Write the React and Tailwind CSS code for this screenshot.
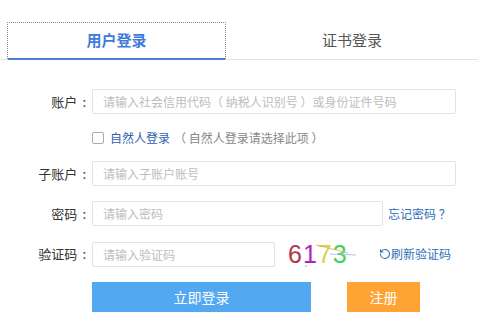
import { RotateCw } from 'lucide-react';

const FONT = { fontFamily: '"Microsoft YaHei", "Noto Sans CJK SC", "Noto Sans", sans-serif' };

function Field({ label, placeholder, width = 'w-[364px]' }) {
  return (
    <div className="flex items-center">
      <span className="w-[92px] pr-[3px] flex justify-end text-[13px] text-[#333]">
        {label}
        <span className="ml-[5px] mr-[3px]">:</span>
      </span>
      <input
        placeholder={placeholder}
        className={`${width} h-[25px] rounded-[2px] border border-[#e3e3e3] px-[10px] text-[12px] outline-none placeholder:text-[#bdbdbd]`}
      />
    </div>
  );
}

export default function App() {
  return (
    <div className="w-[488px] h-[327px] bg-white overflow-hidden" style={FONT}>
      {/* Tabs */}
      <div className="pt-[22px] flex border-b border-[#e2e2e2] w-[478px]">
        <div className="ml-[7px] w-[219px] h-[37px] border border-dotted border-[#888] border-b-0 relative flex items-center justify-center">
          <span className="text-[15px] font-bold text-[#3f7bd9] -mt-[1px]">用户登录</span>
          <div className="absolute left-0 right-0 -bottom-[1px] h-[2px] bg-[#4a80d4]" />
        </div>
        <div className="flex-1 h-[37px] flex items-center justify-center">
          <span className="text-[15px] text-[#555] -mt-[1px]">证书登录</span>
        </div>
      </div>

      <div className="mt-[29px] flex flex-col">
        <Field label="账户" placeholder="请输入社会信用代码（ 纳税人识别号 ）或身份证件号码" />

        <div className="mt-[18px] ml-[92px] flex items-center h-[12px]">
          <span className="w-[12px] h-[12px] border border-[#aaa] rounded-[2px] bg-white" />
          <span className="ml-[6px] text-[12px] text-[#2f5fb0]">自然人登录</span>
          <span className="ml-[4px] text-[12px] text-[#888]">（ 自然人登录请选择此项 ）</span>
        </div>

        <div className="mt-[17px]">
          <Field label="子账户" placeholder="请输入子账户账号" />
        </div>

        <div className="mt-[15px] flex items-center">
          <Field label="密码" placeholder="请输入密码" width="w-[291px]" />
          <span className="ml-[5px] text-[12px] text-[#2f6fb8]">忘记密码 ？</span>
        </div>

        <div className="mt-[15px] flex items-center">
          <Field label="验证码" placeholder="请输入验证码" width="w-[183px]" />
          <div className="ml-[13px] w-[70px] h-[26px] relative flex items-center">
            <span className="text-[25px] leading-none tracking-[1px]" style={{ fontFamily: '"Liberation Sans", sans-serif' }}>
              <span className="text-[#b3354a]">6</span>
              <span className="text-[#b01fb8]">1</span>
              <span className="text-[#cfd64a]">7</span>
              <span className="text-[#3fd35a]">3</span>
            </span>
            <svg className="absolute inset-0" width="70" height="26" viewBox="0 0 70 26">
              <path d="M28 4 L60 12" stroke="#d0b060" strokeWidth="0.8" fill="none" />
              <path d="M42 13 L68 14" stroke="#80c0e0" strokeWidth="0.8" fill="none" />
              <circle cx="18" cy="25" r="0.8" fill="#999" />
            </svg>
          </div>
          <span className="ml-[21px] flex items-center text-[12px] text-[#2f6fb8]">
            <RotateCw className="w-[12px] h-[12px] -scale-x-100" strokeWidth={2.2} />
            刷新验证码
          </span>
        </div>

        <div className="mt-[15px] flex">
          <button className="ml-[92px] w-[219px] h-[30px] bg-[#53a9f1] text-white text-[14px]">立即登录</button>
          <button className="ml-[36px] w-[73px] h-[30px] bg-[#ffa334] text-white text-[14px]">注册</button>
        </div>
      </div>
    </div>
  );
}
